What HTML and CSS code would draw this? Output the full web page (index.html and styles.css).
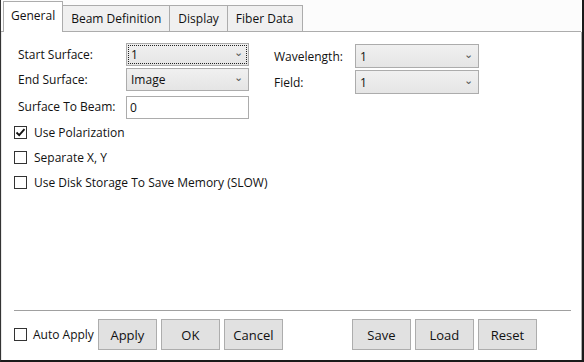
FILE: index.html
```html
<!DOCTYPE html>
<html>
<head>
<meta charset="utf-8">
<link rel="stylesheet" href="styles.css">
</head>
<body>
<div class="window">
  <div class="tabs">
    <div class="tab active">General</div>
    <div class="tab">Beam Definition</div>
    <div class="tab">Display</div>
    <div class="tab">Fiber Data</div>
  </div>
  <div class="panel">
    <div class="form">
      <div class="col">
        <div class="row"><span class="label">Start Surface:</span><div class="select focus"><span>1</span><span class="chev">&#8964;</span></div></div>
        <div class="row"><span class="label">End Surface:</span><div class="select"><span>Image</span><span class="chev">&#8964;</span></div></div>
        <div class="row"><span class="label">Surface To Beam:</span><div class="input">0</div></div>
      </div>
      <div class="col right">
        <div class="row"><span class="label r">Wavelength:</span><div class="select"><span>1</span><span class="chev">&#8964;</span></div></div>
        <div class="row"><span class="label r">Field:</span><div class="select"><span>1</span><span class="chev">&#8964;</span></div></div>
      </div>
    </div>
    <div class="checks">
      <label class="check"><span class="box checked"><svg viewBox="0 0 13 13" width="13" height="13"><path d="M2.5 6.5 L5.2 9.2 L10.5 3.2" fill="none" stroke="#111" stroke-width="1.8"/></svg></span>Use Polarization</label>
      <label class="check"><span class="box"></span>Separate X, Y</label>
      <label class="check"><span class="box"></span>Use Disk Storage To Save Memory (SLOW)</label>
    </div>
    <div class="spacer"></div>
    <div class="sep"></div>
    <div class="footer">
      <label class="check auto"><span class="box"></span>Auto Apply</label>
      <div class="btn">Apply</div>
      <div class="btn">OK</div>
      <div class="btn">Cancel</div>
      <div class="gapx"></div>
      <div class="btn">Save</div>
      <div class="btn">Load</div>
      <div class="btn">Reset</div>
    </div>
  </div>
</div>
</body>
</html>
```
FILE: styles.css
```css
html, body {
  margin: 0;
  padding: 0;
  background: #fff;
}
body {
  width: 584px;
  height: 362px;
  overflow: hidden;
  font-family: "Open Sans", "Noto Sans", sans-serif;
  font-size: 12px;
  color: #111;
}
.window {
  box-sizing: border-box;
  width: 584px;
  height: 362px;
  border-left: 1px solid #333;
  border-right: 2px solid #1a1a1a;
  border-bottom: 2px solid #1a1a1a;
  display: flex;
  flex-direction: column;
  background: #fff;
}
.tabs {
  display: flex;
  align-items: flex-end;
  height: 31px;
  padding-left: 2px;
  border-bottom: 1px solid #acacac;
  margin-right: 1px;
  background: #fcfcfc;
}
.tab {
  box-sizing: border-box;
  height: 26px;
  padding: 0 8px;
  display: flex;
  align-items: center;
  background: #f0f0f0;
  border: 1px solid #acacac;
  border-bottom: none;
  margin-left: -1px;
  white-space: nowrap;
}
.tab.active {
  background: #fff;
  margin-bottom: -1px;
  height: 31px;
  padding: 0 7px 4px 7px;
  position: relative;
  z-index: 1;
  margin-left: 0;
}
.panel {
  flex: 1;
  display: flex;
  flex-direction: column;
  border-right: 1px solid #acacac;
  border-left: 1px solid #e8e8e8;
  padding: 11px 10px 10px 12px;
}
.form {
  display: flex;
  gap: 25px;
  padding-left: 4px;
}
.col {
  display: flex;
  flex-direction: column;
  gap: 2px;
}
.col.right {
  padding-top: 1px;
}
.row {
  display: flex;
  align-items: center;
}
.label {
  width: 108px;
}
.label.r {
  width: 81px;
}
.select {
  box-sizing: border-box;
  width: 123px;
  height: 23px;
  border: 1px solid #acacac;
  background: linear-gradient(#f0f0f0, #e5e5e5);
  display: flex;
  align-items: center;
  justify-content: space-between;
  padding: 0 5px 0 4px;
}
.right .select {
  width: 124px;
  height: 24px;
}
.select.focus {
  outline: 1px dotted #222;
  outline-offset: -3px;
}
.chev {
  font-size: 11px;
  color: #555;
  position: relative;
  top: -3px;
}
.input {
  box-sizing: border-box;
  width: 123px;
  height: 23px;
  margin-top: 3px;
  border: 1px solid #acacac;
  background: #fff;
  padding: 0 3px;
  display: flex;
  align-items: center;
}
.checks {
  display: flex;
  flex-direction: column;
  gap: 8px;
  margin-top: 5px;
}
.check {
  display: flex;
  align-items: center;
  gap: 7px;
  height: 17px;
}
.box {
  box-sizing: border-box;
  width: 13px;
  height: 13px;
  border: 1px solid #333;
  background: #fff;
  display: flex;
}
.box svg {
  margin: -1px;
}
.spacer {
  flex: 1;
}
.sep {
  height: 1px;
  background: #a0a0a0;
  margin-bottom: 8px;
}
.footer {
  display: flex;
  align-items: center;
  gap: 4px;
}
.check.auto {
  gap: 6px;
}
.btn {
  box-sizing: border-box;
  width: 59px;
  height: 31px;
  border: 1px solid #adadad;
  background: #e1e1e1;
  display: flex;
  align-items: center;
  justify-content: center;
  font-size: 13px;
}
.gapx {
  width: 61px;
}
```
